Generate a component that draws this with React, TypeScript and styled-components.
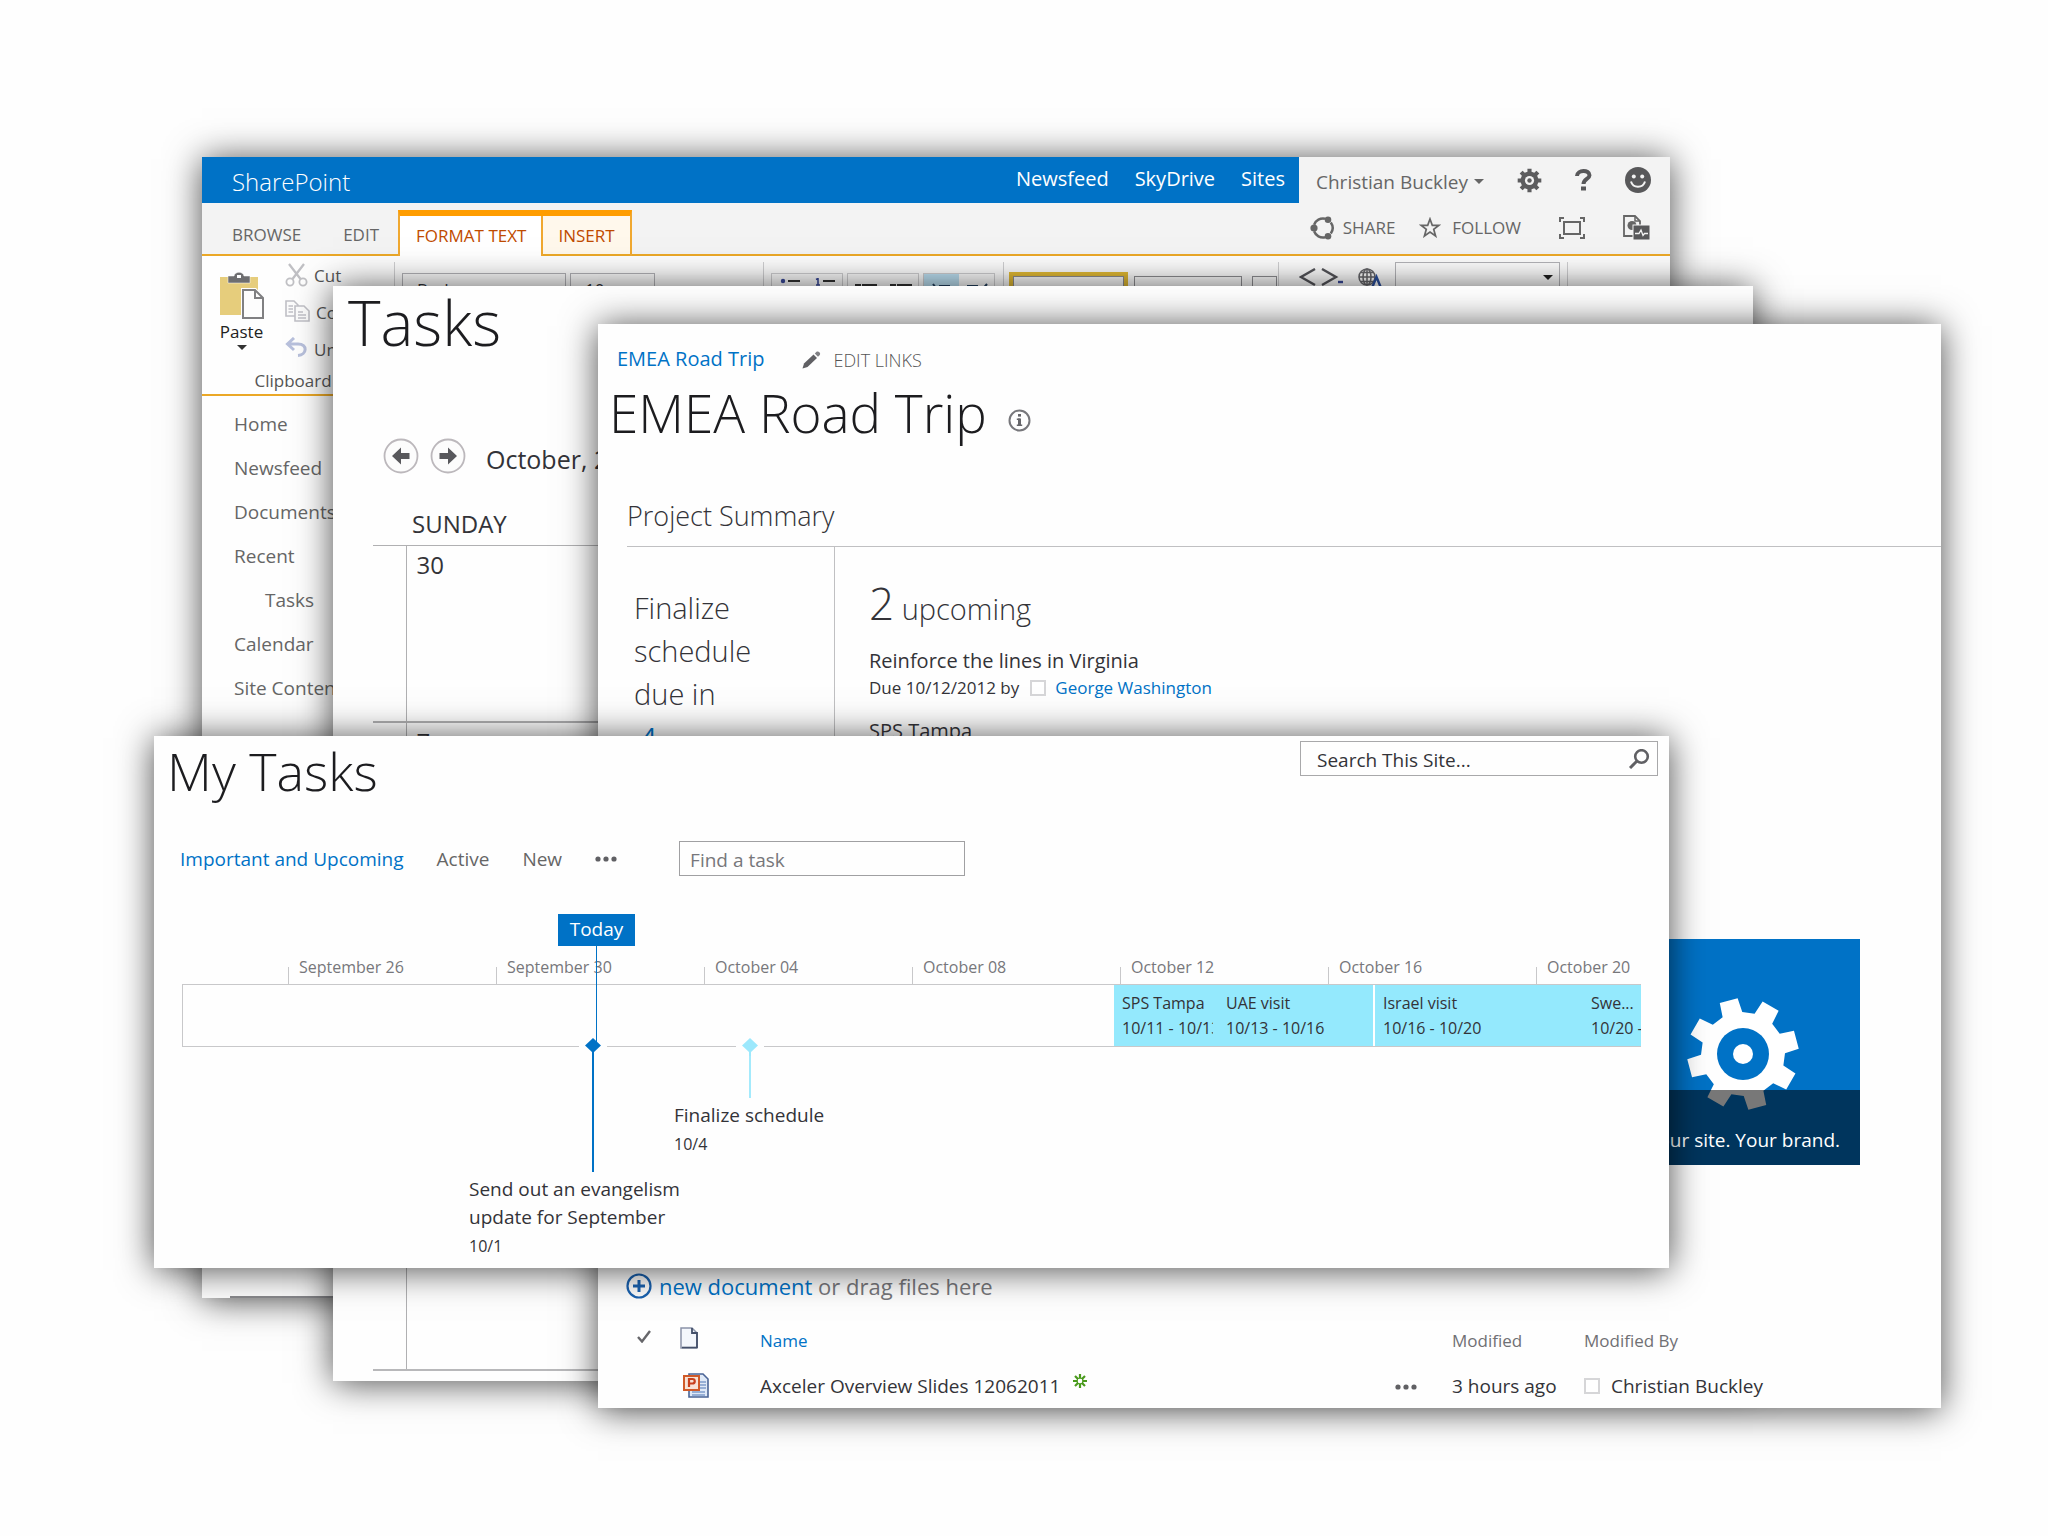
import React from "react";
import styled, { createGlobalStyle, css } from "styled-components";

const BLUE = "#0072c6";
const GREY = "#666666";
const INK = "#333338";
const LINE = "#c0c0c2";

const Global = createGlobalStyle`
  *, *::before, *::after { box-sizing: border-box; }
  html, body { margin: 0; background: #fefefe; }
  body { font-family: "Open Sans", "Noto Sans", sans-serif; color: ${INK}; font-size: 19px; }
  a { text-decoration: none; color: inherit; }
  button, input, select { font: inherit; color: inherit; border-radius: 0; }
  button { background: none; border: 0; padding: 0; margin: 0; display: inline-flex; align-items: center; vertical-align: middle; white-space: nowrap; }
  h1, h2, p, ul { margin: 0; padding: 0; font-weight: inherit; }
  ul { list-style: none; }
  svg { display: block; flex: none; }
`;

const Desk = styled.main`
  position: relative;
  min-height: 100vh;
  min-width: 1280px;
  overflow: hidden;
`;

const Frame = styled.section<{ $top: number; $left: number; $right: number; $height: number }>`
  position: absolute;
  top: ${(p) => p.$top}px;
  left: ${(p) => p.$left}px;
  right: ${(p) => p.$right}px;
  height: ${(p) => p.$height}px;
  display: flex;
  flex-direction: column;
  background: #fefefe;
  box-shadow: 0 2px 34px rgba(0, 0, 0, 0.7);
`;

const Clip = styled.div`
  flex: 1;
  min-height: 0;
  display: flex;
  flex-direction: column;
  overflow: hidden;
`;

const BigTitle = styled.h1<{ $size: number; $line: number; $indent?: number }>`
  font-weight: 300;
  font-size: ${(p) => p.$size}px;
  line-height: ${(p) => p.$line}px;
  padding-left: ${(p) => p.$indent ?? 0}px;
  color: #1c1c1f;
  white-space: nowrap;
`;

/* ---------- SharePoint window ---------- */

const SuiteBar = styled.header`
  display: flex;
  height: 46px;
  flex: none;
  background: #f3f3f3;
`;

const SuiteBlue = styled.div`
  flex: 1;
  display: flex;
  align-items: flex-start;
  justify-content: space-between;
  background: ${BLUE};
  color: #fff;
  padding: 0 14px 0 30px;
`;

const Brand = styled.a`
  font-size: 24px;
  font-weight: 300;
  line-height: 49px;
  height: 46px;
`;

const SuiteLinks = styled.nav`
  display: flex;
  gap: 26px;
  font-size: 20px;
  line-height: 43px;
  height: 46px;
`;

const SuiteUser = styled.div`
  width: 371px;
  display: flex;
  align-items: center;
  justify-content: flex-end;
  gap: 33px;
  padding: 0 19px 0 17px;
  color: ${GREY};
`;

const UserButton = styled.button`
  gap: 6px;
  line-height: 42px;
  padding-top: 3px;
  margin-right: auto;
`;

const TabStrip = styled.div`
  display: flex;
  flex: none;
  height: 53px;
  background: #f3f3f3;
  border-bottom: 2px solid #eba827;
  font-size: 17px;
  color: ${GREY};
`;

const Tab = styled.button<{ $kind?: "active" | "context" }>`
  align-self: flex-end;
  height: 45px;
  padding: 6px 16px 0 17px;
  ${(p) =>
    p.$kind &&
    css`
      height: 38px;
      align-self: flex-start;
      color: #bf4b00;
      padding: 0 15px;
    `}
  ${(p) =>
    p.$kind === "active" &&
    css`
      height: 40px;
      padding: 0 15px 2px 16px;
      background: #fff;
      border-right: 2px solid #f0a830;
    `}
  ${(p) =>
    p.$kind === "context" &&
    css`
      background: #fff8ec;
    `}
`;

const Tabs = styled.div`
  display: flex;
  gap: 9px;
  padding: 0 3px 0 13px;
`;

const ContextTabs = styled.div`
  display: flex;
  align-items: flex-start;
  align-self: flex-end;
  height: 46px;
  margin-bottom: -2px;
  border: 2px solid #f0a830;
  border-top: 6px solid #ff9d00;
  border-bottom: 0;
`;

const PageActions = styled.div`
  margin-left: auto;
  display: flex;
  align-items: center;
  gap: 38px;
  padding: 0 20px 2px 0;
`;

const ActionPair = styled.div`
  display: flex;
  gap: 24px;
`;

const IconLabel = styled.button<{ $gap?: number }>`
  gap: ${(p) => p.$gap ?? 8}px;
`;

const Ribbon = styled.div`
  display: flex;
  flex: none;
  height: 140px;
  border-bottom: 2px solid #eba827;
  padding: 6px 0 0;
  font-size: 17px;
`;

const RibbonGroup = styled.div<{ $width?: number; $gap?: number; $pad?: number }>`
  display: flex;
  flex: none;
  gap: ${(p) => p.$gap ?? 4}px;
  align-items: flex-start;
  width: ${(p) => (p.$width ? `${p.$width}px` : "auto")};
  padding: 11px 0 0 ${(p) => p.$pad ?? 7}px;
  border-right: 1px solid #d0d0d2;
`;

const ClipboardGroup = styled.div`
  width: 193px;
  flex: none;
  display: grid;
  grid-template-columns: 83px 1fr;
  grid-template-rows: 109px 1fr;
  border-right: 1px solid #d0d0d2;
  color: #555;
`;

const PasteButton = styled.button`
  flex-direction: column;
  color: #222;
  padding: 10px 4px 0 0;
  line-height: 26px;
  align-self: start;
`;

const ClipActions = styled.div`
  display: flex;
  flex-direction: column;
  padding-top: 1px;
`;

const ClipButton = styled.button`
  flex: none;
  height: 37px;
  gap: 6px;
  align-items: flex-start;
  line-height: 26px;
`;

const GroupName = styled.span`
  grid-column: 1 / -1;
  text-align: center;
  line-height: 20px;
  padding-right: 10px;
`;

const RibbonSelect = styled.select<{ $width: number }>`
  appearance: none;
  width: ${(p) => p.$width}px;
  height: 34px;
  padding: 0 14px;
  background: transparent;
  border: 1px solid #b4b4b8;
  font-size: 17px;
  line-height: 30px;
`;

const ToolPair = styled.div<{ $first?: string }>`
  width: 72px;
  height: 34px;
  display: flex;
  border: 1px solid #d0d0d2;
  > button {
    flex: 1;
    justify-content: center;
    align-items: flex-start;
    padding-top: 4px;
  }
  > button:first-child {
    background: ${(p) => p.$first ?? "transparent"};
  }
`;

const StyleBox = styled.button<{ $width: number; $active?: boolean }>`
  width: ${(p) => p.$width}px;
  height: 60px;
  margin-top: 3px;
  border: 1px solid #909094;
  outline: ${(p) => (p.$active ? "4px solid #e3bb35" : "0")};
`;

const MarkupGroup = styled.div`
  display: flex;
  flex: none;
  gap: 13px;
  align-items: flex-start;
  padding: 0 7px 0 20px;
  border-right: 1px solid #d0d0d2;
  > button { padding-top: 6px; }
`;

const DropBox = styled.div`
  position: relative;
  > svg { position: absolute; right: 7px; top: 13px; }
`;

const SiteNav = styled.ul`
  padding: 6px 0 0 32px;
  line-height: 44px;
  color: ${GREY};
`;

const SiteNavItem = styled.li<{ $nested?: boolean }>`
  padding-left: ${(p) => (p.$nested ? 31 : 0)}px;
`;

const PaneEdge = styled.div`
  margin: auto 0 0 28px;
  flex: none;
  height: 2px;
  background: #88888c;
`;

/* ---------- Tasks window ---------- */

const MonthBar = styled.div`
  display: flex;
  align-items: center;
  height: 36px;
  margin: 80px 0 30px;
  padding-left: 50px;
  gap: 11px;
  font-size: 25px;
`;

const MonthName = styled.span`
  margin-left: 9px;
  padding-top: 5px;
  line-height: 36px;
`;

const Calendar = styled.table`
  margin-left: 40px;
  width: calc(100% - 40px);
  border-collapse: collapse;
  table-layout: fixed;
  font-size: 24px;
  th, td { padding: 0; text-align: left; font-weight: 400; vertical-align: top; }
  th { height: 41px; line-height: 40px; padding-left: 6px; }
  th:first-child { width: 33px; padding: 0; }
`;

const Week = styled.tr<{ $height: number; $rule: number }>`
  height: ${(p) => p.$height}px;
  border-top: ${(p) => p.$rule}px solid #b0b0b2;
  &:last-child { border-bottom: 2px solid #b8b8ba; }
  td + td {
    border-left: 1px solid #b0b0b2;
    padding: 3px 0 0 10px;
    line-height: 32px;
  }
`;

/* ---------- Road trip window ---------- */

const LinkRow = styled.div`
  display: flex;
  align-items: center;
  gap: 38px;
  height: 28px;
  margin-top: 21px;
  padding-left: 19px;
  font-size: 20px;
  a { color: ${BLUE}; }
`;

const EditLinks = styled.button`
  gap: 12px;
  padding-top: 2px;
  font-size: 18px;
  font-weight: 300;
  color: #555;
`;

const TitleRow = styled.div`
  display: flex;
  align-items: center;
  gap: 21px;
  margin-top: 7px;
  > button { padding-top: 14px; }
`;

const SectionTitle = styled.h2`
  margin: 51px 0 0 29px;
  padding: 0 0 12px;
  line-height: 36px;
  font-size: 27px;
  font-weight: 300;
  border-bottom: 1px solid ${LINE};
`;

const Summary = styled.div`
  display: grid;
  grid-template-columns: 208px 1fr;
  height: 354px;
  margin-left: 29px;
  flex: none;
`;

const Countdown = styled.div`
  border-right: 1px solid ${LINE};
  padding: 39px 40px 0 7px;
  font-size: 29px;
  font-weight: 300;
  line-height: 43px;
`;

const Days = styled.p`
  font-size: 44px;
  line-height: 56px;
  color: ${BLUE};
`;

const Upcoming = styled.div`
  padding: 26px 0 0 34px;
`;

const UpcomingCount = styled.p`
  font-size: 29px;
  line-height: 60px;
  font-weight: 300;
  span { font-size: 44px; }
`;

const DueList = styled.ul`
  padding-top: 8px;
`;

const Due = styled.li`
  margin-bottom: 16px;
  font-size: 20px;
  line-height: 28px;
`;

const DueLine = styled.p`
  display: flex;
  align-items: center;
  font-size: 17px;
  line-height: 26px;
  a { color: ${BLUE}; }
`;

const Presence = styled.input`
  appearance: none;
  width: 16px;
  height: 16px;
  margin: 0 9px 0 11px;
  border: 2px solid #d6d6d8;
  background: #fff;
`;

const TileRow = styled.div`
  display: flex;
  justify-content: flex-end;
  margin: 38px 81px 0 0;
`;

const Tile = styled.a`
  position: relative;
  width: 225px;
  height: 226px;
  background: ${BLUE};
  color: #fff;
  overflow: hidden;
  display: flex;
  align-items: flex-end;
  > svg { position: absolute; left: 51px; top: 58px; }
`;

const TileCaption = styled.span`
  position: relative;
  width: 100%;
  height: 75px;
  padding: 26px 20px 0 0;
  text-align: right;
  white-space: nowrap;
  line-height: 48px;
  background: rgba(0, 0, 0, 0.53);
`;

const NewDocument = styled.div`
  display: flex;
  align-items: center;
  gap: 7px;
  height: 36px;
  margin: 103px 0 14px 28px;
  font-size: 22px;
  line-height: 36px;
  color: #77777b;
  a { color: ${BLUE}; }
`;

const Files = styled.table`
  margin-left: 29px;
  width: calc(100% - 29px);
  table-layout: fixed;
  border-collapse: collapse;
  th, td { height: 45px; padding: 0; text-align: left; font-weight: 400; white-space: nowrap; vertical-align: middle; }
  th { font-size: 17px; color: #707074; }
`;

const FileTh = styled.th<{ $pad?: number; $lift?: number }>`
  && {
    padding-left: ${(p) => p.$pad ?? 0}px;
    padding-bottom: ${(p) => p.$lift ?? 0}px;
  }
`;

const FileTd = styled.td<{ $pad?: number }>`
  && { padding-left: ${(p) => p.$pad ?? 0}px; }
`;

const BlueText = styled.span`
  color: ${BLUE};
`;

const FileName = styled.span`
  display: inline-flex;
  align-items: flex-start;
  gap: 12px;
`;

const ByLine = styled.label`
  display: flex;
  align-items: center;
  ${Presence} { margin: 0 11px 0 0; }
`;

/* ---------- My Tasks window ---------- */

const MyHeader = styled.header`
  display: flex;
  justify-content: space-between;
  align-items: flex-start;
  padding: 0 11px 0 0;
`;

const SearchBox = styled.form`
  display: flex;
  align-items: center;
  width: 358px;
  height: 35px;
  margin-top: 5px;
  padding-right: 7px;
  border: 1px solid #a8a8aa;
`;

const PlainInput = styled.input`
  flex: 1;
  min-width: 0;
  height: 33px;
  padding: 2px 0 0 16px;
  border: 0;
  outline: 0;
  background: transparent;
  &::placeholder { color: ${INK}; opacity: 1; }
`;

const ViewBar = styled.div`
  display: flex;
  align-items: center;
  gap: 33px;
  margin: 35px 0 38px;
  padding-left: 26px;
  color: ${GREY};
`;

const ViewLink = styled.a<{ $current?: boolean }>`
  color: ${(p) => (p.$current ? BLUE : GREY)};
`;

const FindInput = styled.input`
  width: 286px;
  height: 35px;
  margin-left: 29px;
  padding: 2px 10px 0;
  border: 1px solid #a0a0a2;
  background: transparent;
  &::placeholder { color: #77777b; opacity: 1; }
`;

const Timeline = styled.div`
  position: relative;
  margin: 0 28px 0 28px;
  padding-top: 45px;
`;

const Scale = styled.ol`
  display: flex;
  margin: 0;
  padding: 0 0 0 106px;
  list-style: none;
  height: 25px;
  overflow: hidden;
  font-size: 16px;
  line-height: 16px;
  color: #77777b;
`;

const ScaleMark = styled.li`
  display: flex;
  flex: 0 0 208px;
  gap: 10px;
  white-space: nowrap;
  &::before {
    content: "";
    width: 1px;
    height: 17px;
    background: #c8c8ca;
    align-self: flex-end;
  }
`;

const Bar = styled.div`
  display: flex;
  justify-content: flex-end;
  height: 63px;
  border: 1px solid #c8c8ca;
  border-right: 0;
  overflow: hidden;
`;

const Event = styled.div<{ $width: number; $split?: boolean; $end?: number }>`
  flex: 0 0 ${(p) => p.$width}px;
  min-width: 0;
  padding: 6px ${(p) => p.$end ?? 0}px 0 8px;
  background: #94e9fd;
  border-right: ${(p) => (p.$split ? "2px solid #fff" : "0")};
  font-size: 16px;
  line-height: 25px;
  p { overflow: hidden; white-space: nowrap; }
`;

const TodayFlag = styled.div`
  position: absolute;
  top: 0;
  left: 376px;
  width: 77px;
  height: 32px;
  background: ${BLUE};
  color: #fff;
  line-height: 31px;
  text-align: center;
  &::after {
    content: "";
    position: absolute;
    left: 38px;
    top: 32px;
    width: 1px;
    height: 96px;
    background: ${BLUE};
  }
`;

const Milestone = styled.div<{ $left: number }>`
  position: absolute;
  left: ${(p) => p.$left}px;
  top: 122px;
  width: 28px;
  display: flex;
  flex-direction: column;
  align-items: center;
`;

const DiamondPad = styled.div`
  width: 28px;
  height: 20px;
  display: flex;
  justify-content: center;
  background: #fefefe;
`;

const Stem = styled.div<{ $length: number; $color: string }>`
  width: 2px;
  height: ${(p) => p.$length}px;
  background: ${(p) => p.$color};
`;

const MilestoneText = styled.div<{ $width: number; $shift: number }>`
  align-self: flex-start;
  width: ${(p) => p.$width}px;
  margin-left: ${(p) => p.$shift}px;
  padding-top: 3px;
  line-height: 28px;
  small { display: block; font-size: 16px; line-height: 30px; }
`;

/* ---------- drawings ---------- */

const Caret = ({ color = GREY, size = 10 }: { color?: string; size?: number }) => (
  <svg width={size} height={size / 2} viewBox="0 0 10 5" aria-hidden="true">
    <path d="M0 0H10L5 5Z" fill={color} />
  </svg>
);

const gearPath = (teeth: number, outer: number, root: number, tip: number, base: number, start: number) => {
  const point = (r: number, deg: number) => {
    const a = (deg * Math.PI) / 180;
    return `${(r * Math.cos(a)).toFixed(2)} ${(r * Math.sin(a)).toFixed(2)}`;
  };
  const parts: string[] = [];
  for (let i = 0; i < teeth; i++) {
    const c = start + (360 / teeth) * i;
    parts.push(point(root, c - base), point(outer, c - tip), point(outer, c + tip), point(root, c + base));
  }
  return `M${parts.join("L")}Z`;
};

const SmallGear = () => (
  <svg width="25" height="25" viewBox="-12.5 -12.5 25 25" aria-hidden="true">
    <path d={gearPath(8, 12, 9, 10, 13, 0)} fill="#5c5c5e" />
    <circle r="4.6" fill="#f3f3f3" />
    <circle r="2.2" fill="#5c5c5e" />
  </svg>
);

const Smiley = () => (
  <svg width="26" height="26" viewBox="0 0 26 26" aria-hidden="true">
    <circle cx="13" cy="13" r="13" fill="#58585a" />
    <circle cx="8.8" cy="9.6" r="2" fill="#f3f3f3" />
    <circle cx="17.2" cy="9.6" r="2" fill="#f3f3f3" />
    <path d="M6 14.500C8 21.500 18 21.500 20 14.500" fill="none" stroke="#f3f3f3" strokeWidth="2" />
  </svg>
);

const Question = () => (
  <svg width="17" height="22" viewBox="0 0 17 22" aria-hidden="true">
    <path d="M2 7C2.300 0.500 14.500 0.500 14.500 6.200C14.500 10 8.500 10 8.500 15" fill="none" stroke="#58585a" strokeWidth="4" />
    <rect x="6" y="17.500" width="5" height="4" fill="#58585a" />
  </svg>
);

const ShareIcon = () => (
  <svg width="25" height="24" viewBox="0 0 25 24" aria-hidden="true">
    <path
      d="M4.100 8.700A9.500 9.500 0 0 1 15 2.700M20.800 6.500A9.500 9.500 0 0 1 20.800 17.500M15 21.300A9.500 9.500 0 0 1 4.100 15.300"
      fill="none"
      stroke="#666"
      strokeWidth="2.500"
    />
    <circle cx="4" cy="12" r="3.600" fill="#666" />
    <circle cx="18" cy="3.800" r="3.300" fill="#666" />
    <circle cx="18" cy="20.200" r="3.300" fill="#666" />
  </svg>
);

const Star = () => (
  <svg width="22" height="21" viewBox="0 0 22 21" aria-hidden="true">
    <path d="M11 2L13.300 8.300H20L14.700 12.300L16.600 19L11 15L5.400 19L7.300 12.300L2 8.300H8.700Z" fill="none" stroke="#666" strokeWidth="1.700" />
  </svg>
);

const Focus = () => (
  <svg width="26" height="22" viewBox="0 0 26 22" fill="none" stroke="#666" strokeWidth="2" aria-hidden="true">
    <path d="M1 5V1H5M21 1H25V5M25 17V21H21M5 21H1V17" />
    <rect x="5" y="5" width="16" height="12" />
  </svg>
);

const DocPulse = () => (
  <svg width="27" height="25" viewBox="0 0 27 25" aria-hidden="true">
    <path d="M1 1H12L17 6V21H1Z" fill="#f3f3f3" stroke="#666" strokeWidth="1.800" />
    <path d="M12 1V6H17" fill="none" stroke="#666" strokeWidth="1.500" />
    <circle cx="9" cy="10.500" r="4.500" fill="#666" />
    <rect x="10" y="10" width="17" height="15" fill="#58585a" stroke="#f3f3f3" />
    <path d="M12 18.500H16L18 15L20 20.500L21.500 18.500H25" fill="none" stroke="#f3f3f3" strokeWidth="1.300" />
  </svg>
);

const PasteIcon = () => (
  <svg width="46" height="47" viewBox="0 0 46 47" aria-hidden="true">
    <rect x="1" y="5" width="38" height="38" fill="#e6cd7c" />
    <path d="M9 4H15C16 -1 24 -1 25 4H31V11H9Z" fill="#6e6e70" stroke="#fff" strokeWidth="0.500" />
    <rect x="18" y="3" width="4" height="3" fill="#fff" />
    <path d="M22 16H37L45 25V47H22Z" fill="#fff" />
    <path d="M24 18H36L44 26V46H24Z" fill="#fdfdfd" stroke="#808082" strokeWidth="2" />
    <path d="M36 18V26H44" fill="none" stroke="#808082" strokeWidth="2" />
  </svg>
);

const Scissors = () => (
  <svg width="23" height="24" viewBox="0 0 23 24" fill="none" stroke="#c0c0c4" strokeWidth="2.300" aria-hidden="true">
    <path d="M4 1L15.500 16M19 1L7.500 16" />
    <circle cx="5" cy="19" r="3.600" strokeWidth="1.800" />
    <circle cx="18" cy="19" r="3.600" strokeWidth="1.800" />
  </svg>
);

const CopyIcon = () => (
  <svg width="25" height="22" viewBox="0 0 25 22" fill="#fcfcfc" stroke="#c0c0c6" strokeWidth="1.600" aria-hidden="true">
    <path d="M1 1H9L13 5V16H1Z" />
    <path d="M10 6H19L24 11V21H10Z" />
    <path d="M3.500 6H8M3.500 9H8M3.500 12H8M13 12H18M13 15H21M13 18H21" />
  </svg>
);

const UndoIcon = () => (
  <svg width="23" height="20" viewBox="0 0 23 20" fill="none" stroke="#b8c0dc" strokeWidth="3" aria-hidden="true">
    <path d="M9 1L2.500 7L9 13M3 7H13C23 7 22 18 13 18.500" />
  </svg>
);

const ListIcon = ({ mark }: { mark: string }) => (
  <svg width="24" height="24" viewBox="0 0 24 24" aria-hidden="true">
    {mark === "dot" && <circle cx="5" cy="3" r="2.200" fill="#3a4a9a" />}
    {mark === "one" && <path d="M3 1.500L5 0.500V7M3 7H7" fill="none" stroke="#3a4a9a" strokeWidth="1.600" />}
    {mark === "dent" && <path d="M1 7H7M1 13H7" stroke="#333" strokeWidth="2" />}
    <path d={mark === "dent" ? "M8 7H23M8 13H23" : "M10 3H22M10 11H22"} stroke="#333" strokeWidth="2" />
  </svg>
);

const DirIcon = ({ flip }: { flip?: boolean }) => (
  <svg width="24" height="24" viewBox="0 0 24 24" aria-hidden="true">
    <path d={flip ? "M2 8H13M2 12H13M22 6L17 12" : "M9 8H20M9 12H20M3 6L6 10L3 14"} fill="none" stroke="#24405f" strokeWidth="2" />
  </svg>
);

const CodeIcon = () => (
  <svg width="46" height="20" viewBox="0 0 46 20" fill="none" stroke="#55555a" strokeWidth="2.400" aria-hidden="true">
    <path d="M16 1L2 9L16 17M23 1L37 9L23 17" />
    <path d="M39 14H44" stroke="#3a4a9a" />
  </svg>
);

const GlobeIcon = () => (
  <svg width="24" height="20" viewBox="0 0 24 20" fill="none" stroke="#66666a" strokeWidth="1.500" aria-hidden="true">
    <circle cx="9" cy="9" r="8" />
    <path d="M9 1V17M1 9H17M3 4.500H15M3 13.500H15" />
    <ellipse cx="9" cy="9" rx="4" ry="8" />
    <path d="M14 20L18.500 9L23 20" stroke="#2d52a0" strokeWidth="2.400" />
  </svg>
);

const Arrow = ({ back }: { back?: boolean }) => (
  <svg width="36" height="36" viewBox="0 0 36 36" aria-hidden="true">
    <circle cx="18" cy="18" r="16.500" fill="#fcfcfc" stroke="#bcb8bc" strokeWidth="1.800" />
    <path d={back ? "M9 18L18 9.500V15H26.500V21H18V26.500Z" : "M27 18L18 9.500V15H9.500V21H18V26.500Z"} fill="#58585c" />
  </svg>
);

const Pencil = () => (
  <svg width="19" height="18" viewBox="0 0 19 18" aria-hidden="true">
    <path d="M0.500 17.500L2 12.500L11.500 3.500L15 7L5.500 16Z" fill="#606064" />
    <path d="M12.800 2.500L14.500 0.800C16.500 -0.500 19 1.800 17.800 3.900L16 5.800Z" fill="#808084" />
  </svg>
);

const Info = () => (
  <svg width="23" height="23" viewBox="0 0 23 23" aria-hidden="true">
    <circle cx="11.500" cy="11.500" r="10" fill="none" stroke="#77777b" strokeWidth="2" />
    <rect x="10" y="9.500" width="3" height="7.500" fill="#66666a" />
    <path d="M8.800 10.200H12M8.800 16.300H14.200" fill="none" stroke="#66666a" strokeWidth="1.400" />
    <rect x="10" y="5" width="3" height="2.600" fill="#66666a" />
  </svg>
);

const BigGear = () => (
  <svg width="114" height="114" viewBox="-57 -57 114 114" aria-hidden="true">
    <path d={gearPath(8, 56, 42, 9.5, 14, -15)} fill="#fff" />
    <circle r="26" fill={BLUE} />
    <circle r="10" fill="#fff" />
  </svg>
);

const PlusCircle = () => (
  <svg width="26" height="26" viewBox="0 0 26 26" fill="none" stroke="#1a62b0" aria-hidden="true">
    <circle cx="13" cy="13" r="11.500" strokeWidth="2.200" />
    <path d="M13 7V19M7 13H19" strokeWidth="3" />
  </svg>
);

const Check = () => (
  <svg width="14" height="13" viewBox="0 0 14 13" aria-hidden="true">
    <path d="M1 7L5 11.500L13 1" fill="none" stroke="#66666a" strokeWidth="2.400" />
  </svg>
);

const PageIcon = () => (
  <svg width="18" height="22" viewBox="0 0 18 22" aria-hidden="true">
    <path d="M1 1H12L17 6V21H1Z" fill="#f4f7fc" stroke="#8a93a8" strokeWidth="1.500" />
    <path d="M12 1V6H17V21" fill="none" stroke="#44506a" strokeWidth="1.800" />
    <path d="M2 20.500H17" stroke="#44506a" strokeWidth="1.600" />
  </svg>
);

const SlidesIcon = () => (
  <svg width="26" height="25" viewBox="0 0 26 25" aria-hidden="true">
    <path d="M6 1H20L25 6V24H6Z" fill="#dfe9f7" stroke="#4a6496" strokeWidth="1.600" />
    <path d="M17 9H23M17 12H23M17 15H23M9 19H22M9 22H22" stroke="#7f9ccb" strokeWidth="1.400" />
    <rect x="1" y="3" width="15" height="14" fill="#f7e3d6" stroke="#d05a28" strokeWidth="2" />
    <path d="M6 14V6H9.500C12.500 6 12.500 10.500 9.500 10.500H6" fill="none" stroke="#c8401c" strokeWidth="2.200" />
  </svg>
);

const NewBurst = () => (
  <svg width="16" height="16" viewBox="0 0 16 16" fill="none" stroke="#4a9a1c" strokeWidth="2.200" aria-hidden="true">
    <path d="M8 1V5.500M8 10.500V15M1 8H5.500M10.500 8H15M3 3L6 6M13 3L10 6M3 13L6 10M13 13L10 10" />
    <circle cx="8" cy="8" r="3" strokeWidth="1.200" />
  </svg>
);

const Dots = () => (
  <svg width="22" height="6" viewBox="0 0 22 6" fill="#606064" aria-hidden="true">
    <circle cx="3" cy="3" r="2.600" />
    <circle cx="11" cy="3" r="2.600" />
    <circle cx="19" cy="3" r="2.600" />
  </svg>
);

const Magnifier = () => (
  <svg width="22" height="20" viewBox="0 0 22 20" fill="none" stroke="#606064" aria-hidden="true">
    <circle cx="13.500" cy="7.500" r="6.300" strokeWidth="2.600" />
    <path d="M9 12L2 19" strokeWidth="3" />
  </svg>
);

const Diamond = ({ color }: { color: string }) => (
  <svg width="16" height="20" viewBox="0 0 16 20" aria-hidden="true">
    <path d="M8 2L16 9.500L8 17L0 9.500Z" fill={color} />
    <rect x="7" y="14" width="2" height="6" fill={color} />
  </svg>
);

/* ---------- windows ---------- */

const navItems = [
  { label: "Home" },
  { label: "Newsfeed" },
  { label: "Documents" },
  { label: "Recent" },
  { label: "Tasks", nested: true },
  { label: "Calendar" },
  { label: "Site Contents" },
];

const SharePointWindow = () => (
  <Frame $top={157} $left={202} $right={378} $height={1141} aria-label="SharePoint">
    <Clip>
      <SuiteBar>
        <SuiteBlue>
          <Brand href="#">SharePoint</Brand>
          <SuiteLinks>
            <a href="#">Newsfeed</a>
            <a href="#">SkyDrive</a>
            <a href="#">Sites</a>
          </SuiteLinks>
        </SuiteBlue>
        <SuiteUser>
          <UserButton type="button">
            Christian Buckley <Caret />
          </UserButton>
          <button type="button" aria-label="Settings"><SmallGear /></button>
          <button type="button" aria-label="Help"><Question /></button>
          <button type="button" aria-label="Feedback"><Smiley /></button>
        </SuiteUser>
      </SuiteBar>
      <TabStrip>
        <Tabs>
          <Tab type="button">BROWSE</Tab>
          <Tab type="button">EDIT</Tab>
        </Tabs>
        <ContextTabs>
          <Tab type="button" $kind="active">FORMAT TEXT</Tab>
          <Tab type="button" $kind="context">INSERT</Tab>
        </ContextTabs>
        <PageActions>
          <ActionPair>
            <IconLabel type="button"><ShareIcon />SHARE</IconLabel>
            <IconLabel type="button" $gap={11}><Star />FOLLOW</IconLabel>
          </ActionPair>
          <button type="button" aria-label="Focus on content"><Focus /></button>
          <button type="button" aria-label="Page analytics"><DocPulse /></button>
        </PageActions>
      </TabStrip>
      <Ribbon>
        <ClipboardGroup>
          <PasteButton type="button">
            <PasteIcon />
            Paste
            <Caret color="#333" />
          </PasteButton>
          <ClipActions>
            <ClipButton type="button"><Scissors />Cut</ClipButton>
            <ClipButton type="button"><CopyIcon />Copy</ClipButton>
            <ClipButton type="button"><UndoIcon />Undo</ClipButton>
          </ClipActions>
          <GroupName>Clipboard</GroupName>
        </ClipboardGroup>
        <RibbonGroup $width={369}>
          <RibbonSelect $width={164} aria-label="Font" defaultValue="Body"><option>Body</option></RibbonSelect>
          <RibbonSelect $width={85} aria-label="Font size" defaultValue="10"><option>10</option></RibbonSelect>
        </RibbonGroup>
        <RibbonGroup $width={240}>
          <ToolPair>
            <button type="button" aria-label="Bullets"><ListIcon mark="dot" /></button>
            <button type="button" aria-label="Numbering"><ListIcon mark="one" /></button>
          </ToolPair>
          <ToolPair>
            <button type="button" aria-label="Outdent"><ListIcon mark="dent" /></button>
            <button type="button" aria-label="Indent"><ListIcon mark="dent" /></button>
          </ToolPair>
          <ToolPair $first="#bfe3f5">
            <button type="button" aria-label="Left to right"><DirIcon /></button>
            <button type="button" aria-label="Right to left"><DirIcon flip /></button>
          </ToolPair>
        </RibbonGroup>
        <RibbonGroup $width={275} $gap={10} $pad={9}>
          <StyleBox type="button" $width={111} $active aria-label="Paragraph" />
          <StyleBox type="button" $width={108} aria-label="Heading" />
          <StyleBox type="button" $width={25} aria-label="More styles" />
        </RibbonGroup>
        <MarkupGroup>
          <button type="button" aria-label="Edit source"><CodeIcon /></button>
          <button type="button" aria-label="Language"><GlobeIcon /></button>
          <DropBox>
            <RibbonSelect $width={165} aria-label="Convert" defaultValue=""><option value="" /></RibbonSelect>
            <Caret color="#222" size={10} />
          </DropBox>
        </MarkupGroup>
      </Ribbon>
      <SiteNav>
        {navItems.map((item) => (
          <SiteNavItem key={item.label} $nested={item.nested}>
            <a href="#">{item.label}</a>
          </SiteNavItem>
        ))}
      </SiteNav>
      <PaneEdge />
    </Clip>
  </Frame>
);

const TasksWindow = () => (
  <Frame $top={286} $left={333} $right={295} $height={1095} aria-label="Tasks">
    <Clip>
      <BigTitle $size={62} $line={72} $indent={15}>Tasks</BigTitle>
      <MonthBar>
        <button type="button" aria-label="Previous month"><Arrow back /></button>
        <button type="button" aria-label="Next month"><Arrow /></button>
        <MonthName>October, 2012</MonthName>
      </MonthBar>
      <Calendar>
        <thead>
          <tr><th /><th scope="col">SUNDAY</th></tr>
        </thead>
        <tbody>
          <Week $height={177} $rule={1}><td /><td>30</td></Week>
          <Week $height={648} $rule={2}><td /><td>7</td></Week>
        </tbody>
      </Calendar>
    </Clip>
  </Frame>
);

const RoadTripWindow = () => (
  <Frame $top={324} $left={598} $right={107} $height={1084} aria-label="EMEA Road Trip">
    <Clip>
      <LinkRow>
        <a href="#">EMEA Road Trip</a>
        <EditLinks type="button"><Pencil />EDIT LINKS</EditLinks>
      </LinkRow>
      <TitleRow>
        <BigTitle $size={53} $line={68} $indent={11}>EMEA Road Trip</BigTitle>
        <button type="button" aria-label="About this site"><Info /></button>
      </TitleRow>
      <SectionTitle>Project Summary</SectionTitle>
      <Summary>
        <Countdown>
          <p>Finalize schedule due in</p>
          <Days>4</Days>
        </Countdown>
        <Upcoming>
          <UpcomingCount><span>2</span> upcoming</UpcomingCount>
          <DueList>
            <Due>
              <p>Reinforce the lines in Virginia</p>
              <DueLine>
                <label htmlFor="gw">Due 10/12/2012 by</label>
                <Presence type="checkbox" id="gw" />
                <a href="#">George Washington</a>
              </DueLine>
            </Due>
            <Due><p>SPS Tampa</p></Due>
          </DueList>
        </Upcoming>
      </Summary>
      <TileRow>
        <Tile href="#">
          <BigGear />
          <TileCaption>Your site. Your brand.</TileCaption>
        </Tile>
      </TileRow>
      <NewDocument>
        <PlusCircle />
        <span><a href="#">new document</a> or drag files here</span>
      </NewDocument>
      <Files>
        <colgroup>
          <col width="53" />
          <col width="80" />
          <col width="635" />
          <col width="57" />
          <col width="132" />
          <col />
        </colgroup>
        <thead>
          <tr>
            <FileTh $pad={10} $lift={8}><Check /></FileTh>
            <FileTh $lift={5}><PageIcon /></FileTh>
            <FileTh scope="col"><BlueText>Name</BlueText></FileTh>
            <FileTh />
            <FileTh scope="col">Modified</FileTh>
            <FileTh scope="col">Modified By</FileTh>
          </tr>
        </thead>
        <tbody>
          <tr>
            <td />
            <FileTd $pad={3}><SlidesIcon /></FileTd>
            <td><FileName>Axceler Overview Slides 12062011 <NewBurst /></FileName></td>
            <td><button type="button" aria-label="More"><Dots /></button></td>
            <td>3 hours ago</td>
            <td><ByLine><Presence type="checkbox" />Christian Buckley</ByLine></td>
          </tr>
        </tbody>
      </Files>
    </Clip>
  </Frame>
);

const dates = ["September 26", "September 30", "October 04", "October 08", "October 12", "October 16", "October 20"];

const MyTasksWindow = () => (
  <Frame $top={736} $left={154} $right={379} $height={532} aria-label="My Tasks">
    <Clip>
      <MyHeader>
        <BigTitle $size={52} $line={70} $indent={13}>My Tasks</BigTitle>
        <SearchBox>
          <PlainInput type="text" aria-label="Search this site" placeholder="Search This Site..." />
          <button type="button" aria-label="Search"><Magnifier /></button>
        </SearchBox>
      </MyHeader>
      <ViewBar>
        <ViewLink href="#" $current>Important and Upcoming</ViewLink>
        <ViewLink href="#">Active</ViewLink>
        <ViewLink href="#">New</ViewLink>
        <button type="button" aria-label="More views"><Dots /></button>
        <FindInput type="text" aria-label="Find a task" placeholder="Find a task" />
      </ViewBar>
      <Timeline>
        <Scale>
          {dates.map((d) => (
            <ScaleMark key={d}>{d}</ScaleMark>
          ))}
        </Scale>
        <Bar>
          <Event $width={104} $end={5}><p>SPS Tampa</p><p>10/11 - 10/13</p></Event>
          <Event $width={157} $split><p>UAE visit</p><p>10/13 - 10/16</p></Event>
          <Event $width={208}><p>Israel visit</p><p>10/16 - 10/20</p></Event>
          <Event $width={58}><p>Swe...</p><p>10/20 - 10/24</p></Event>
        </Bar>
        <Milestone $left={397}>
          <DiamondPad><Diamond color={BLUE} /></DiamondPad>
          <Stem $length={116} $color={BLUE} />
          <MilestoneText $width={220} $shift={-110}>
            Send out an evangelism update for September<small>10/1</small>
          </MilestoneText>
        </Milestone>
        <Milestone $left={554}>
          <DiamondPad><Diamond color="#9ce8fc" /></DiamondPad>
          <Stem $length={42} $color="#a4eafc" />
          <MilestoneText $width={180} $shift={-62}>
            Finalize schedule<small>10/4</small>
          </MilestoneText>
        </Milestone>
        <TodayFlag>Today</TodayFlag>
      </Timeline>
    </Clip>
  </Frame>
);

export default function App() {
  return (
    <>
      <Global />
      <Desk>
        <SharePointWindow />
        <TasksWindow />
        <RoadTripWindow />
        <MyTasksWindow />
      </Desk>
    </>
  );
}
